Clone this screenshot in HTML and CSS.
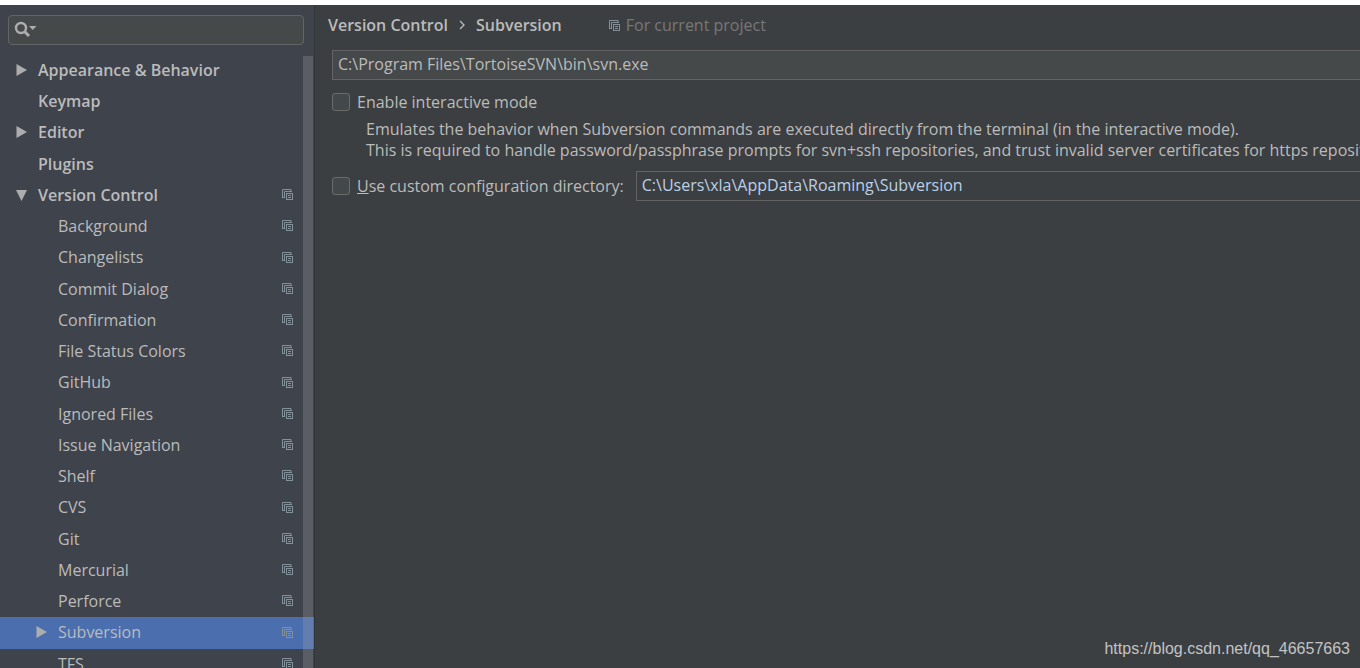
FILE: index.html
```html
<!DOCTYPE html>
<html lang="en">
<head>
    <meta charset="UTF-8">
    <meta name="viewport" content="width=device-width, initial-scale=1.0">
    <title>Settings</title>
    <link rel="stylesheet" href="styles.css">
</head>
<body>
    <!-- shared icons -->
    <svg class="symbols" aria-hidden="true">
        <symbol id="copy" viewBox="0 0 11 11">
            <path d="M0.5 9V0.5H9V2.5M0 8.5H3M2.5 9V2.5H10" fill="none" stroke="currentColor"/>
            <rect x="4.5" y="4.5" width="6" height="6" fill="none" stroke="currentColor"/>
            <path d="M6 6.5H9M6 8.5H9" fill="none" stroke="currentColor"/>
        </symbol>
        <symbol id="right" viewBox="0 0 11 12">
            <path d="M0.5 0L11 6L0.5 12Z" fill="#adadad"/>
        </symbol>
        <symbol id="down" viewBox="0 0 11 12">
            <path d="M0 1H11L5.5 12Z" fill="#adadad"/>
        </symbol>
    </svg>

    <div class="settings">
        <aside class="sidebar">
            <div class="search">
                <svg class="search-icon" viewBox="0 0 24 18" aria-hidden="true">
                    <circle cx="7" cy="7" r="5" fill="none" stroke="#adadad" stroke-width="2.4"/>
                    <path d="M10.5 10.5L15 15" stroke="#adadad" stroke-width="3"/>
                    <path d="M15 5H22.5L18.7 9Z" fill="#adadad"/>
                </svg>
                <input class="search-input" type="text" aria-label="Search settings">
            </div>
            <div class="tree-wrap">
                <ul class="tree">
                    <li class="row top"><svg class="arrow"><use href="#right"/></svg><span class="name">Appearance &amp; Behavior</span></li>
                    <li class="row top"><span class="arrow"></span><span class="name">Keymap</span></li>
                    <li class="row top"><svg class="arrow"><use href="#right"/></svg><span class="name">Editor</span></li>
                    <li class="row top"><span class="arrow"></span><span class="name">Plugins</span></li>
                    <li class="row top"><svg class="arrow"><use href="#down"/></svg><span class="name">Version Control</span><svg class="copy"><use href="#copy"/></svg></li>
                    <li class="row child"><span class="arrow"></span><span class="name">Background</span><svg class="copy"><use href="#copy"/></svg></li>
                    <li class="row child"><span class="arrow"></span><span class="name">Changelists</span><svg class="copy"><use href="#copy"/></svg></li>
                    <li class="row child"><span class="arrow"></span><span class="name">Commit Dialog</span><svg class="copy"><use href="#copy"/></svg></li>
                    <li class="row child"><span class="arrow"></span><span class="name">Confirmation</span><svg class="copy"><use href="#copy"/></svg></li>
                    <li class="row child"><span class="arrow"></span><span class="name">File Status Colors</span><svg class="copy"><use href="#copy"/></svg></li>
                    <li class="row child"><span class="arrow"></span><span class="name">GitHub</span><svg class="copy"><use href="#copy"/></svg></li>
                    <li class="row child"><span class="arrow"></span><span class="name">Ignored Files</span><svg class="copy"><use href="#copy"/></svg></li>
                    <li class="row child"><span class="arrow"></span><span class="name">Issue Navigation</span><svg class="copy"><use href="#copy"/></svg></li>
                    <li class="row child"><span class="arrow"></span><span class="name">Shelf</span><svg class="copy"><use href="#copy"/></svg></li>
                    <li class="row child"><span class="arrow"></span><span class="name">CVS</span><svg class="copy"><use href="#copy"/></svg></li>
                    <li class="row child"><span class="arrow"></span><span class="name">Git</span><svg class="copy"><use href="#copy"/></svg></li>
                    <li class="row child"><span class="arrow"></span><span class="name">Mercurial</span><svg class="copy"><use href="#copy"/></svg></li>
                    <li class="row child"><span class="arrow"></span><span class="name">Perforce</span><svg class="copy"><use href="#copy"/></svg></li>
                    <li class="row child selected"><svg class="arrow"><use href="#right"/></svg><span class="name">Subversion</span><svg class="copy"><use href="#copy"/></svg></li>
                    <li class="row child"><span class="arrow"></span><span class="name">TFS</span><svg class="copy"><use href="#copy"/></svg></li>
                </ul>
                <div class="scrollbar"></div>
            </div>
        </aside>

        <main class="content">
            <header class="breadcrumb">
                <span class="crumb">Version Control</span>
                <svg class="chevron" viewBox="0 0 6 10" aria-hidden="true"><path d="M1 1L5 5L1 9" fill="none" stroke="#bbbbbb" stroke-width="1.3"/></svg>
                <span class="crumb">Subversion</span>
                <span class="scope"><svg class="copy"><use href="#copy"/></svg>For current project</span>
            </header>
            <input class="field" type="text" aria-label="Path to Subversion executable" value="C:\Program Files\TortoiseSVN\bin\svn.exe">
            <div class="option">
                <input class="check" type="checkbox" id="interactive">
                <label for="interactive">Enable interactive mode</label>
            </div>
            <p class="hint">Emulates the behavior when Subversion commands are executed directly from the terminal (in the interactive mode).<br>This is required to handle password/passphrase prompts for svn+ssh repositories, and trust invalid server certificates for https repositories.</p>
            <div class="option">
                <input class="check" type="checkbox" id="custom-dir">
                <label for="custom-dir"><u>U</u>se custom configuration directory:</label>
                <input class="field directory" type="text" aria-label="Configuration directory" value="C:\Users\xla\AppData\Roaming\Subversion">
            </div>
        </main>
    </div>
    <div class="watermark">https://blog.csdn.net/qq_46657663</div>
</body>
</html>
```
FILE: styles.css
```css
* {
    box-sizing: border-box;
}

body {
    margin: 0;
    padding-top: 5px;
    height: 100vh;
    overflow: hidden;
    background-color: #fff;
    color: #bbbbbb;
    font-family: "Open Sans", "Noto Sans", sans-serif;
    font-size: 16px;
}

input {
    font: inherit;
    color: inherit;
}

.symbols {
    position: absolute;
    width: 0;
    height: 0;
}

.settings {
    display: flex;
    height: 100%;
    background-color: #3c3f41;
}

.sidebar {
    display: flex;
    flex-direction: column;
    flex: none;
    width: 315px;
    background-color: #3f434c;
    border-right: 1px solid #333638;
}

.search {
    display: flex;
    align-items: center;
    flex: none;
    height: 30px;
    margin: 10px 10px 10px 8px;
    padding-left: 5px;
    background-color: #45494a;
    border: 1px solid #646464;
    border-radius: 4px;
}

.search-icon {
    width: 24px;
    height: 18px;
}

.search-input {
    flex: 1;
    min-width: 0;
    padding: 0 4px;
    background: none;
    border: none;
    outline: none;
}

.tree-wrap {
    position: relative;
    flex: 1;
    min-height: 0;
    overflow: hidden;
}

.tree {
    margin: 0;
    padding: 0;
    list-style: none;
}

.row {
    display: flex;
    align-items: center;
    height: 31px;
    padding: 0 21px 2px 16px;
}

.row:nth-child(4n+3) {
    height: 32px;
}

.top {
    font-weight: 600;
}

.child {
    padding-left: 36px;
}

.selected {
    background-color: #4b6eaf;
}

.arrow {
    flex: none;
    width: 11px;
    height: 12px;
    margin-right: 11px;
}

.name {
    flex: 1;
}

.copy {
    flex: none;
    width: 11px;
    height: 11px;
    color: #84909a;
}

/* lies over the rows, so the selection shows through */
.scrollbar {
    position: absolute;
    top: 1px;
    right: 1px;
    bottom: 0;
    width: 10px;
    background-color: rgba(166, 166, 174, 0.27);
}

.content {
    flex: 1;
    min-width: 0;
    padding-left: 17px;
    overflow: hidden;
}

.breadcrumb {
    display: flex;
    align-items: center;
    height: 40px;
    margin-left: -4px;
    margin-bottom: 5px;
}

.crumb {
    font-weight: 600;
}

.chevron {
    width: 6px;
    height: 10px;
    margin: 0 11px;
}

.scope {
    display: flex;
    align-items: center;
    gap: 6px;
    margin-left: 47px;
    color: #777777;
}

.field {
    display: block;
    width: 100%;
    height: 30px;
    padding: 0 5px 2px;
    background-color: #45494a;
    border: 1px solid #646464;
    border-right: none;
    border-radius: 0;
    outline: none;
}

.option {
    display: flex;
    align-items: center;
    height: 30px;
    margin-top: 7px;
    white-space: nowrap;
}

.check {
    appearance: none;
    flex: none;
    width: 18px;
    height: 18px;
    margin: 0 7px 0 0;
    background-color: #43494a;
    border: 1px solid #6b6b6b;
    border-radius: 3px;
}

.check:checked {
    background-color: #4b6eaf;
}

.hint {
    margin: 2px 0 10px 34px;
    line-height: 21px;
    white-space: nowrap;
}

.directory {
    flex: 1;
    width: auto;
    min-width: 0;
    margin-left: 12px;
    background-color: #3c3f41;
    color: #bbd0e6;
}

.watermark {
    position: absolute;
    right: 10px;
    bottom: 9px;
    color: #c3c4c5;
    font-family: "Liberation Sans", Arial, sans-serif;
    font-size: 16px;
    line-height: 20px;
}
```
